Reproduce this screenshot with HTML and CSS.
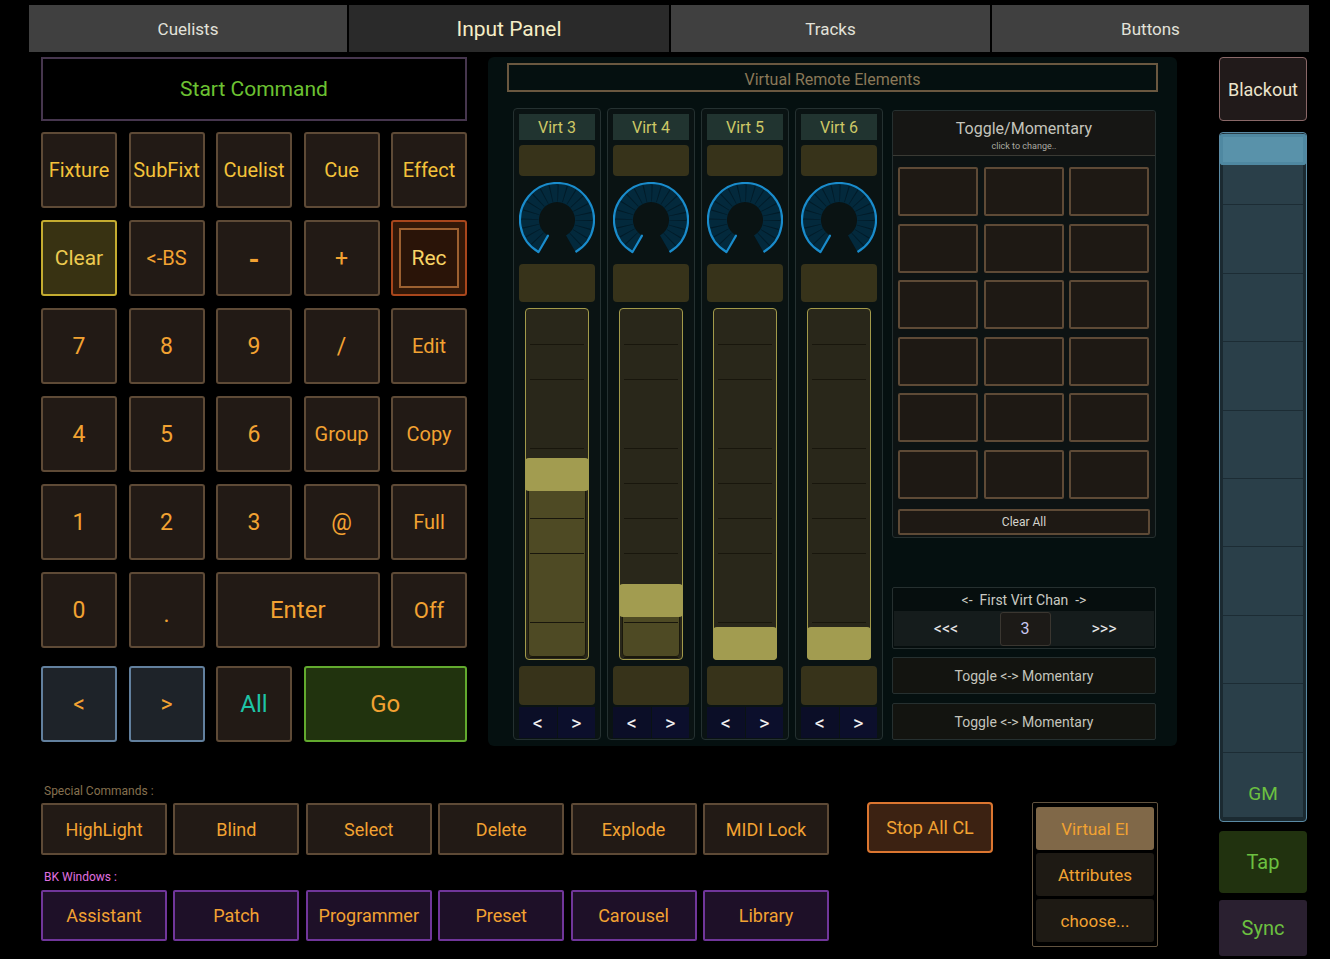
FILE: index.html
```html
<!DOCTYPE html>
<html>
<head>
<meta charset="utf-8">
<link rel="stylesheet" href="styles.css">
</head>
<body>
<div class="tabs">
  <div class="tab t1">Cuelists</div>
  <div class="tab t2 active">Input Panel</div>
  <div class="tab t3">Tracks</div>
  <div class="tab t4">Buttons</div>
</div>
<div class="workspace">
  <div class="leftarea">
    <div class="toprow">
      <div class="keypad">
        <div class="startcmd">Start Command</div>
        <div class="grid">
          <div class="key y">Fixture</div>
          <div class="key y">SubFixt</div>
          <div class="key y">Cuelist</div>
          <div class="key y">Cue</div>
          <div class="key y">Effect</div>
          <div class="key clear">Clear</div>
          <div class="key">&lt;-BS</div>
          <div class="key minus">-</div>
          <div class="key big">+</div>
          <div class="key rec"><span class="recin">Rec</span></div>
          <div class="key big">7</div>
          <div class="key big">8</div>
          <div class="key big">9</div>
          <div class="key big">/</div>
          <div class="key">Edit</div>
          <div class="key big">4</div>
          <div class="key big">5</div>
          <div class="key big">6</div>
          <div class="key">Group</div>
          <div class="key">Copy</div>
          <div class="key big">1</div>
          <div class="key big">2</div>
          <div class="key big">3</div>
          <div class="key big">@</div>
          <div class="key">Full</div>
          <div class="key big">0</div>
          <div class="key big dot">.</div>
          <div class="key span2 huge">Enter</div>
          <div class="key mid">Off</div>
        </div>
        <div class="grid last">
          <div class="key nav big">&lt;</div>
          <div class="key nav big">&gt;</div>
          <div class="key all huge">All</div>
          <div class="key go span2 huge">Go</div>
        </div>
      </div>

      <div class="vpanel">
        <div class="vtitle">Virtual Remote Elements</div>
        <div class="vbody">
          <div class="strips">
            <div class="strip">
              <div class="vlabel">Virt 3</div>
              <div class="vbtn a"></div>
              <div class="knob"><svg width="76" height="76" viewBox="2 2 76 76"><defs><clipPath id="rc1"><path d="M21.5 72.04 A37 37 0 1 1 58.5 72.04 L49 55.59 A18 18 0 1 0 31 55.59 Z"/></clipPath></defs><path class="ring" d="M21.5 72.04 A37 37 0 1 1 58.5 72.04 L49 55.59 A18 18 0 1 0 31 55.59 Z"/><circle class="ticks" cx="40" cy="40" r="27" clip-path="url(#rc1)"/><path class="arc" d="M21.5 72.04 A37 37 0 1 1 58.5 72.04"/><path class="ind" d="M21.5 72.04 L31 55.59"/></svg></div>
              <div class="vbtn b"></div>
              <div class="fader" style="--pos:169px"><div class="fill"></div><div class="lines"></div><div class="handle"></div></div>
              <div class="vbtn c"></div>
              <div class="arrows"><span>&lt;</span><span>&gt;</span></div>
            </div>
            <div class="strip">
              <div class="vlabel">Virt 4</div>
              <div class="vbtn a"></div>
              <div class="knob"><svg width="76" height="76" viewBox="2 2 76 76"><defs><clipPath id="rc2"><path d="M21.5 72.04 A37 37 0 1 1 58.5 72.04 L49 55.59 A18 18 0 1 0 31 55.59 Z"/></clipPath></defs><path class="ring" d="M21.5 72.04 A37 37 0 1 1 58.5 72.04 L49 55.59 A18 18 0 1 0 31 55.59 Z"/><circle class="ticks" cx="40" cy="40" r="27" clip-path="url(#rc2)"/><path class="arc" d="M21.5 72.04 A37 37 0 1 1 58.5 72.04"/><path class="ind" d="M21.5 72.04 L31 55.59"/></svg></div>
              <div class="vbtn b"></div>
              <div class="fader" style="--pos:43px"><div class="fill"></div><div class="lines"></div><div class="handle"></div></div>
              <div class="vbtn c"></div>
              <div class="arrows"><span>&lt;</span><span>&gt;</span></div>
            </div>
            <div class="strip">
              <div class="vlabel">Virt 5</div>
              <div class="vbtn a"></div>
              <div class="knob"><svg width="76" height="76" viewBox="2 2 76 76"><defs><clipPath id="rc3"><path d="M21.5 72.04 A37 37 0 1 1 58.5 72.04 L49 55.59 A18 18 0 1 0 31 55.59 Z"/></clipPath></defs><path class="ring" d="M21.5 72.04 A37 37 0 1 1 58.5 72.04 L49 55.59 A18 18 0 1 0 31 55.59 Z"/><circle class="ticks" cx="40" cy="40" r="27" clip-path="url(#rc3)"/><path class="arc" d="M21.5 72.04 A37 37 0 1 1 58.5 72.04"/><path class="ind" d="M21.5 72.04 L31 55.59"/></svg></div>
              <div class="vbtn b"></div>
              <div class="fader" style="--pos:0px"><div class="lines"></div><div class="handle"></div></div>
              <div class="vbtn c"></div>
              <div class="arrows"><span>&lt;</span><span>&gt;</span></div>
            </div>
            <div class="strip">
              <div class="vlabel">Virt 6</div>
              <div class="vbtn a"></div>
              <div class="knob"><svg width="76" height="76" viewBox="2 2 76 76"><defs><clipPath id="rc4"><path d="M21.5 72.04 A37 37 0 1 1 58.5 72.04 L49 55.59 A18 18 0 1 0 31 55.59 Z"/></clipPath></defs><path class="ring" d="M21.5 72.04 A37 37 0 1 1 58.5 72.04 L49 55.59 A18 18 0 1 0 31 55.59 Z"/><circle class="ticks" cx="40" cy="40" r="27" clip-path="url(#rc4)"/><path class="arc" d="M21.5 72.04 A37 37 0 1 1 58.5 72.04"/><path class="ind" d="M21.5 72.04 L31 55.59"/></svg></div>
              <div class="vbtn b"></div>
              <div class="fader" style="--pos:0px"><div class="lines"></div><div class="handle"></div></div>
              <div class="vbtn c"></div>
              <div class="arrows"><span>&lt;</span><span>&gt;</span></div>
            </div>
          </div>

          <div class="tcol">
            <div class="tpanel">
              <div class="thead">
                <div class="ttitle">Toggle/Momentary</div>
                <div class="tsub">click to change..</div>
              </div>
              <div class="tgrid">
                <div class="tcell"></div><div class="tcell"></div><div class="tcell"></div>
                <div class="tcell"></div><div class="tcell"></div><div class="tcell"></div>
                <div class="tcell"></div><div class="tcell"></div><div class="tcell"></div>
                <div class="tcell"></div><div class="tcell"></div><div class="tcell"></div>
                <div class="tcell"></div><div class="tcell"></div><div class="tcell"></div>
                <div class="tcell"></div><div class="tcell"></div><div class="tcell"></div>
              </div>
              <div class="clearall">Clear All</div>
            </div>
            <div class="fvc">
              <div class="ftitle">&lt;-&nbsp; First Virt Chan &nbsp;-&gt;</div>
              <div class="frow">
                <span class="fnav">&lt;&lt;&lt;</span>
                <span class="fnum">3</span>
                <span class="fnav">&gt;&gt;&gt;</span>
              </div>
            </div>
            <div class="tm first">Toggle &lt;-&gt; Momentary</div>
            <div class="tm second">Toggle &lt;-&gt; Momentary</div>
          </div>
        </div>
      </div>
    </div>

    <div class="bottom">
      <div class="cmds">
        <div class="blabel special">Special Commands :</div>
        <div class="brow">
          <div class="bbtn">HighLight</div>
          <div class="bbtn">Blind</div>
          <div class="bbtn">Select</div>
          <div class="bbtn">Delete</div>
          <div class="bbtn">Explode</div>
          <div class="bbtn">MIDI Lock</div>
        </div>
        <div class="blabel bk">BK Windows :</div>
        <div class="brow second">
          <div class="bbtn purple">Assistant</div>
          <div class="bbtn purple">Patch</div>
          <div class="bbtn purple">Programmer</div>
          <div class="bbtn purple">Preset</div>
          <div class="bbtn purple">Carousel</div>
          <div class="bbtn purple">Library</div>
        </div>
      </div>
      <div class="stopall">Stop All CL</div>
      <div class="choosebox">
        <div class="cb sel">Virtual El</div>
        <div class="cb">Attributes</div>
        <div class="cb">choose...</div>
      </div>
    </div>
  </div>

  <div class="rightcol">
    <div class="blackout">Blackout</div>
    <div class="gm">
      <div class="gmlines"></div>
      <div class="gmh"></div>
      <div class="gmlabel">GM</div>
    </div>
    <div class="tap">Tap</div>
    <div class="sync">Sync</div>
  </div>
</div>
</body>
</html>
```

FILE: styles.css
```css
* { box-sizing: border-box; margin: 0; padding: 0; }

body {
  background: #000;
  width: 1330px;
  height: 959px;
  overflow: hidden;
  font-family: Roboto, "Noto Sans", sans-serif;
}

/* Tabs */
.tabs {
  display: flex;
  gap: 2px;
  margin: 5px 0 0 29px;
  height: 47px;
}
.tab {
  height: 47px;
  background: #404040;
  color: #e2e2da;
  font-size: 17px;
  display: flex;
  align-items: center;
  justify-content: center;
}
.t1 { width: 318px; }
.t2 { width: 320px; }
.t3 { width: 319px; }
.t4 { width: 317px; }
.tab.active {
  background: #2a2a2a;
  color: #f6eec6;
  font-size: 21px;
}

/* Layout */
.workspace {
  display: flex;
  margin-top: 5px;
  padding-left: 41px;
}
.leftarea {
  width: 1136px;
  flex-shrink: 0;
  display: flex;
  flex-direction: column;
}
.toprow {
  display: flex;
  gap: 21px;
  align-items: flex-start;
}

/* Keypad */
.keypad { width: 426px; flex-shrink: 0; }
.startcmd {
  height: 64px;
  border: 2px solid #46364e;
  display: flex;
  align-items: center;
  justify-content: center;
  color: #6cc232;
  font-size: 21px;
}
.grid {
  display: grid;
  grid-template-columns: repeat(5, 76px);
  column-gap: 11.5px;
  row-gap: 12px;
  margin-top: 11px;
}
.grid.last { margin-top: 18px; }
.key {
  height: 76px;
  background: #221a15;
  border: 2px solid #5e4a36;
  border-radius: 3px;
  color: #f2a232;
  font-size: 20px;
  display: flex;
  align-items: center;
  justify-content: center;
}
.key.y { color: #f4c23a; font-size: 20px; }
.key.big { font-size: 23px; }
.key.minus { font-size: 28px; font-weight: 700; padding-top: 2px; }
.key.dot { padding-top: 8px; }
.key.mid { font-size: 22px; }
.key.huge { font-size: 24px; }
.key.span2 { grid-column: span 2; }
.key.clear {
  background: #383212;
  border-color: #c4ac30;
  color: #ecca50;
  font-size: 21px;
}
.key.rec {
  background: #321808;
  border-color: #a8461c;
  padding: 6px;
}
.recin {
  width: 100%;
  height: 100%;
  border: 2px solid #9c6030;
  background: #2a1408;
  color: #f8d466;
  font-size: 21px;
  display: flex;
  align-items: center;
  justify-content: center;
}
.key.nav {
  background: #1e2329;
  border-color: #62809e;
}
.key.all { color: #1ec4a6; }
.key.go {
  background: #21330e;
  border-color: #62aa2e;
}

/* Virtual panel */
.vpanel {
  width: 689px;
  height: 689px;
  flex-shrink: 0;
  background: #051010;
  border-radius: 6px;
  padding: 6px 0 0 19px;
}
.vtitle {
  width: 651px;
  height: 29px;
  border: 2px solid #6a5840;
  color: #8a7858;
  font-size: 16px;
  padding-top: 3px;
  display: flex;
  align-items: center;
  justify-content: center;
}
.vbody {
  display: flex;
  margin-top: 16px;
  margin-left: 6px;
}
.strips { display: flex; gap: 6px; }
.strip {
  width: 88px;
  height: 632px;
  border: 1px solid #253131;
  border-radius: 4px;
  background: #0a1313;
  padding: 5px 5px 0;
  display: flex;
  flex-direction: column;
}
.vlabel {
  height: 26px;
  flex-shrink: 0;
  background: #213430;
  color: #cdc866;
  font-size: 16px;
  display: flex;
  align-items: center;
  justify-content: center;
}
.vbtn {
  background: #37331a;
  border-radius: 4px;
  flex-shrink: 0;
}
.vbtn.a { height: 31px; margin-top: 5px; }
.vbtn.b { height: 38px; }
.vbtn.c { height: 39px; margin-top: 6px; }
.knob {
  height: 88px;
  flex-shrink: 0;
  display: flex;
  align-items: center;
  justify-content: center;
}
.knob svg { display: block; }
.ring { fill: #03293c; }
.ticks { fill: none; stroke: #021b28; stroke-width: 17; stroke-dasharray: 0.9 6.17; }
.arc { fill: none; stroke: #1a8ccc; stroke-width: 2.2; }
.ind { fill: none; stroke: #1a8ccc; stroke-width: 2.2; stroke-linecap: round; }

.fader {
  position: relative;
  height: 352px;
  flex-shrink: 0;
  margin: 6px 6px 0;
  border: 1px solid #a29a4a;
  border-radius: 4px;
  background: #29271a;
}
.fader .fill {
  position: absolute;
  left: 2px;
  right: 2px;
  bottom: 2px;
  height: calc(var(--pos) + 14px);
  background: #4e4a24;
  border: 1px solid #1a180c;
  border-radius: 4px;
}
.fader .lines {
  position: absolute;
  left: 4px;
  right: 4px;
  top: 1px;
  bottom: 0;
  background: repeating-linear-gradient(to bottom, transparent 0, transparent 34px, #18160c 34px, #18160c 34.8px);
}
.fader .handle {
  position: absolute;
  left: -1px;
  right: -1px;
  bottom: calc(var(--pos) - 1px);
  height: 33px;
  background: #a29c50;
  border-radius: 4px;
}
.arrows {
  height: 31px;
  margin-top: 2px;
  flex-shrink: 0;
  display: flex;
  gap: 1px;
}
.arrows span {
  flex: 1;
  background: #0b0e27;
  color: #f0f0f0;
  font-size: 20px;
  display: flex;
  align-items: center;
  justify-content: center;
}
.arrows span + span { background: #0c0f2c; }

/* Toggle column */
.tcol {
  margin-left: 9px;
  width: 264px;
  flex-shrink: 0;
  margin-top: 2px;
}
.tpanel {
  height: 428px;
  border: 1px solid #263030;
  border-radius: 3px;
  background: #0d1313;
}
.thead {
  height: 45px;
  background: #161614;
  border-bottom: 1px solid #3a3a34;
  border-radius: 3px 3px 0 0;
  text-align: center;
  color: #c4c4bc;
  padding-top: 8px;
}
.ttitle { font-size: 16px; line-height: 20px; }
.tsub { font-size: 9px; line-height: 11px; margin-top: 2px; color: #aaaaa2; }
.tgrid {
  display: grid;
  grid-template-columns: repeat(3, 80px);
  grid-auto-rows: 49px;
  column-gap: 5.5px;
  row-gap: 7.5px;
  padding: 11px 5px 0;
}
.tcell {
  background: #1e1914;
  border: 2px solid #5e4a36;
  border-radius: 2px;
}
.clearall {
  margin: 10px 5px 0;
  height: 26px;
  background: #1e1914;
  border: 2px solid #5e4a36;
  border-radius: 2px;
  color: #d4d4cc;
  font-size: 12px;
  display: flex;
  align-items: center;
  justify-content: center;
}
.fvc {
  margin-top: 49px;
  height: 62px;
  border: 1px solid #263030;
  border-radius: 2px;
  background: #060e0e;
}
.ftitle {
  height: 23px;
  color: #cacac2;
  font-size: 14px;
  display: flex;
  align-items: center;
  justify-content: center;
}
.frow {
  height: 35px;
  margin: 0 1px;
  background: #151c1c;
  display: flex;
  align-items: center;
  justify-content: space-between;
  padding: 0 32px 0 34px;
}
.fnav { color: #e6e6e6; font-size: 16px; width: 36px; text-align: center; }
.fnum {
  width: 51px;
  height: 34px;
  border: 1px solid #3a3630;
  border-radius: 3px;
  background: #1c1a17;
  color: #c8c8f0;
  font-size: 16px;
  display: flex;
  align-items: center;
  justify-content: center;
}
.tm {
  height: 37px;
  border: 1px solid #263030;
  border-radius: 2px;
  background: #131410;
  color: #c4c4bc;
  font-size: 14px;
  display: flex;
  align-items: center;
  justify-content: center;
}
.tm.first { margin-top: 8px; }
.tm.second { margin-top: 9px; }

/* Bottom */
.bottom {
  margin-top: 36px;
  display: flex;
  align-items: flex-start;
}
.cmds { width: 788px; flex-shrink: 0; }
.blabel {
  height: 18px;
  line-height: 18px;
  font-size: 12px;
  padding-left: 3px;
}
.blabel.special { color: #85704f; }
.blabel.bk { color: #e070e0; margin-top: 13px; }
.brow {
  display: flex;
  gap: 6.4px;
  margin-top: 3px;
}
.brow.second { margin-top: 4px; }
.bbtn {
  width: 126px;
  height: 52px;
  flex-shrink: 0;
  background: #221a15;
  border: 2px solid #5e4a36;
  border-radius: 2px;
  color: #f2a232;
  font-size: 18px;
  display: flex;
  align-items: center;
  justify-content: center;
}
.bbtn.purple {
  height: 51px;
  background: #1e1028;
  border-color: #70369a;
}
.stopall {
  margin: 20px 0 0 38px;
  width: 126px;
  height: 51px;
  flex-shrink: 0;
  background: #3c2212;
  border: 2px solid #dc7630;
  border-radius: 4px;
  color: #f2a232;
  font-size: 18px;
  display: flex;
  align-items: center;
  justify-content: center;
}
.choosebox {
  margin: 20px 0 0 39px;
  width: 126px;
  height: 145px;
  flex-shrink: 0;
  border: 1px solid #62533f;
  border-radius: 2px;
  padding: 4px 3px;
  display: flex;
  flex-direction: column;
  gap: 3px;
}
.cb {
  height: 43px;
  background: #1e1a14;
  border-radius: 3px;
  color: #f2a232;
  font-size: 17px;
  display: flex;
  align-items: center;
  justify-content: center;
}
.cb.sel { background: #806848; }

/* Right column */
.rightcol {
  margin-left: 42px;
  width: 88px;
  flex-shrink: 0;
  display: flex;
  flex-direction: column;
}
.blackout {
  height: 64px;
  background: #211a1a;
  border: 1px solid #8a6868;
  border-radius: 4px;
  color: #ece4cc;
  font-size: 18px;
  display: flex;
  align-items: center;
  justify-content: center;
}
.gm {
  position: relative;
  margin-top: 11px;
  height: 690px;
  border: 1px solid #5a8aa4;
  border-radius: 4px;
  background: #2a3f49;
  box-shadow: inset 3px 0 0 #1b2a31, inset -3px 0 0 #1b2a31, inset 0 -4px 0 #1b2a31;
}
.gmlines {
  position: absolute;
  left: 3px;
  right: 3px;
  top: 4px;
  bottom: 4px;
  background: repeating-linear-gradient(to bottom, transparent 0, transparent 67.4px, #1c2c34 67.4px, #1c2c34 68.4px);
}
.gmh {
  position: absolute;
  top: 1px;
  left: 0;
  right: 0;
  height: 31px;
  background: #5992aa;
  border-radius: 3px;
  box-shadow: inset 0 0 0 3px #4f88a1;
}
.gmlabel {
  position: absolute;
  left: 0;
  right: 0;
  bottom: 17px;
  text-align: center;
  line-height: 20px;
  color: #6cc040;
  font-size: 19px;
}
.tap {
  margin-top: 9px;
  height: 62px;
  background: #21320f;
  border-radius: 4px;
  color: #6cc040;
  font-size: 20px;
  display: flex;
  align-items: center;
  justify-content: center;
}
.sync {
  margin-top: 7px;
  height: 56px;
  background: #2a2030;
  border-radius: 3px;
  color: #6cc040;
  font-size: 20px;
  display: flex;
  align-items: center;
  justify-content: center;
}
```
